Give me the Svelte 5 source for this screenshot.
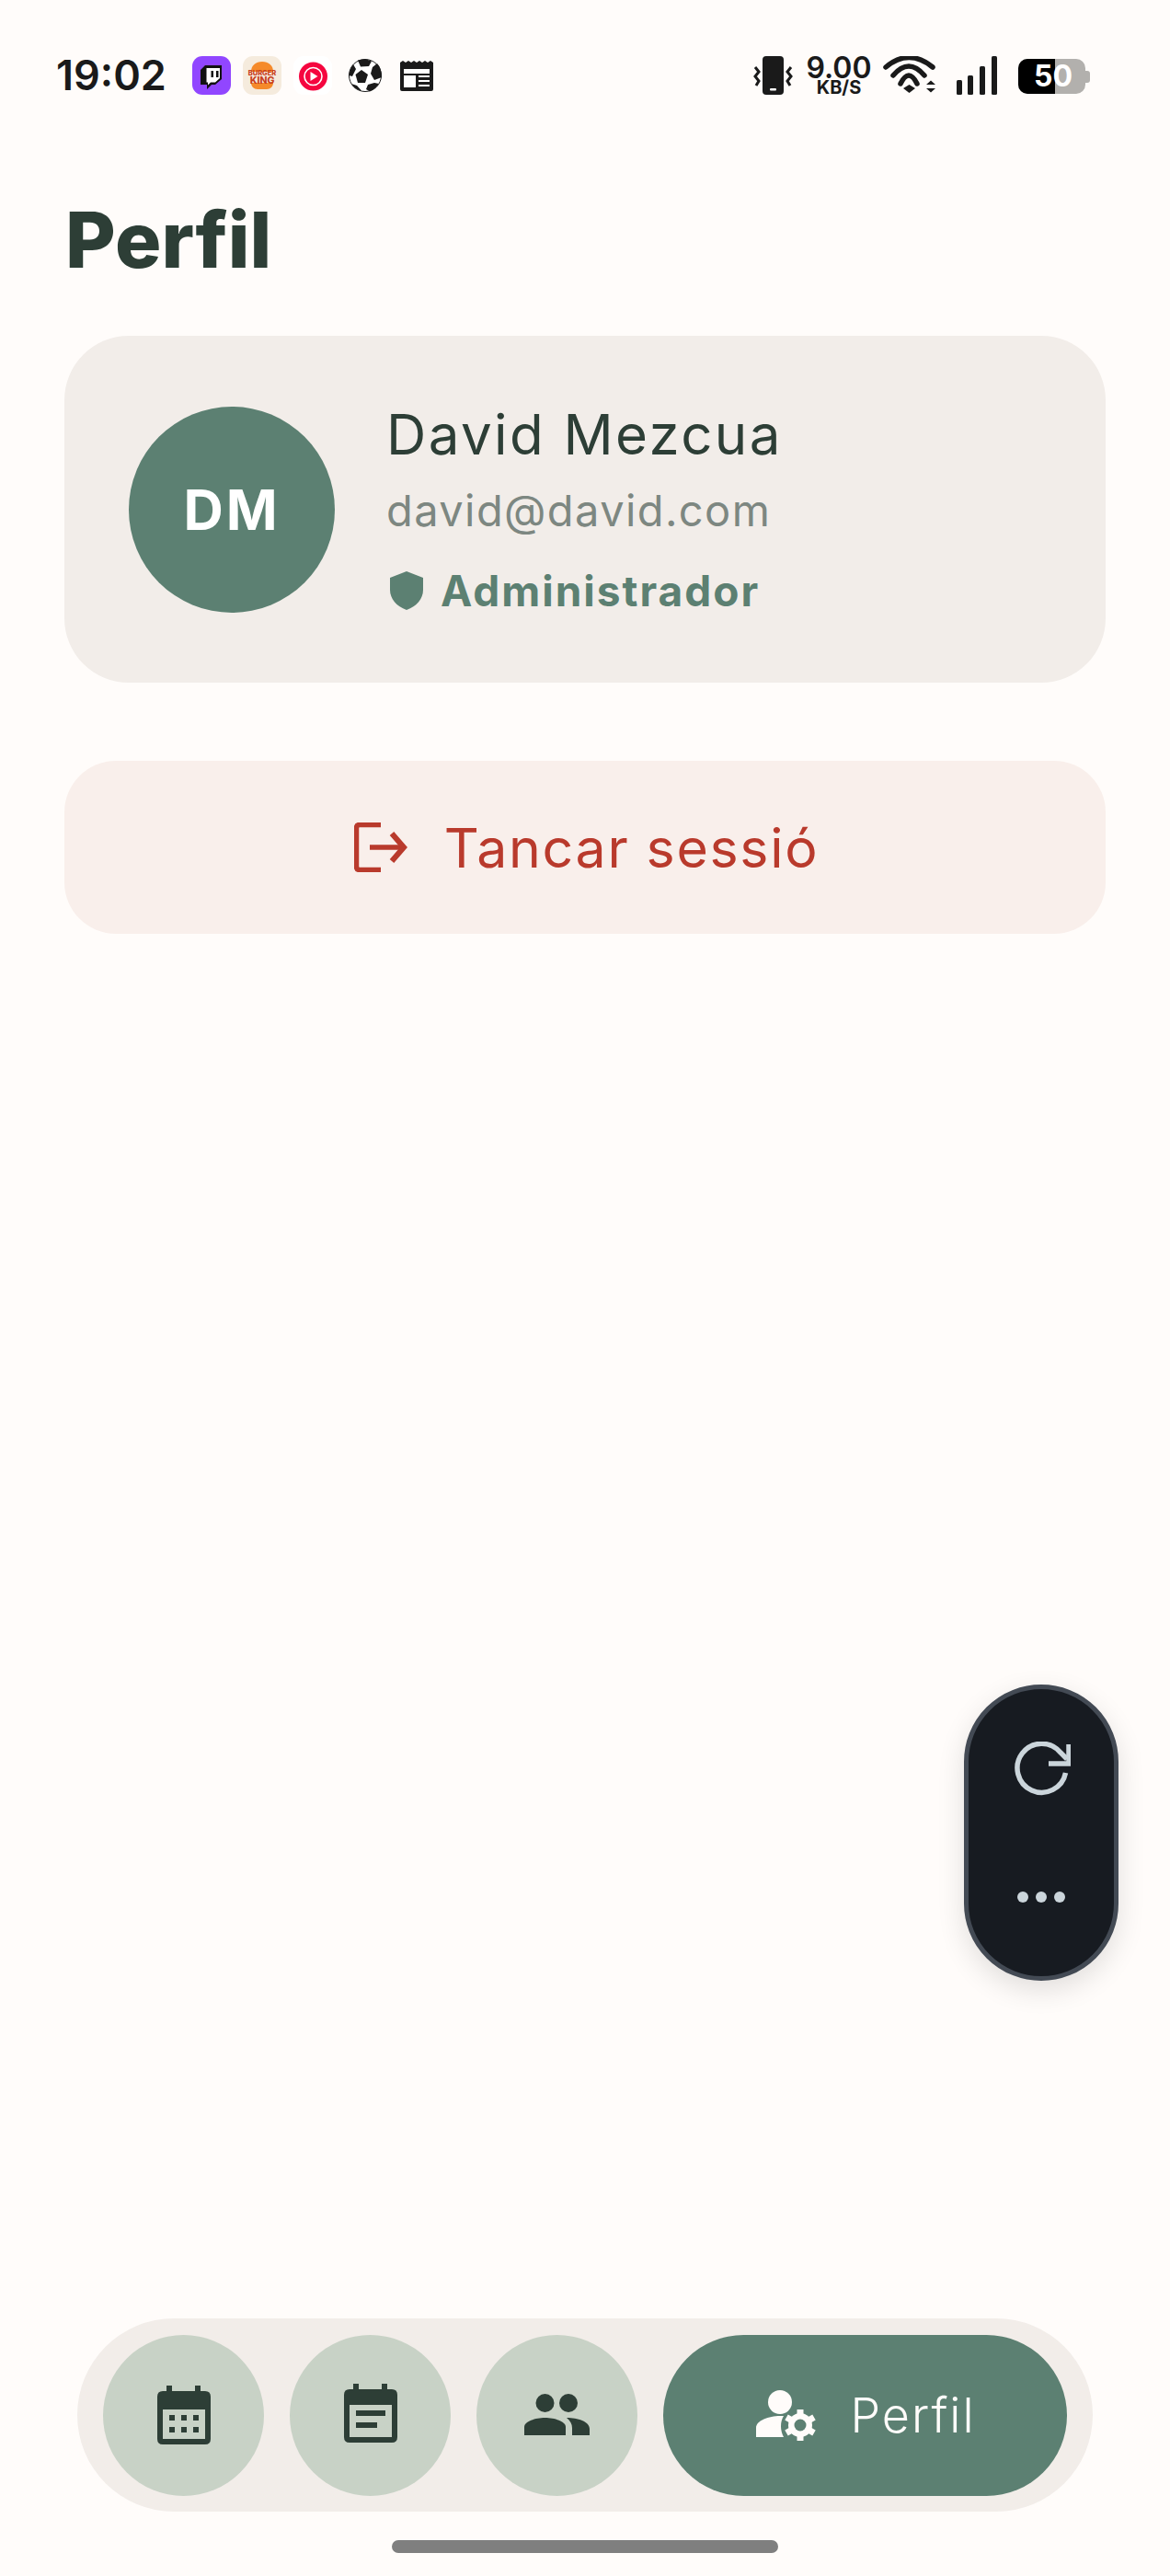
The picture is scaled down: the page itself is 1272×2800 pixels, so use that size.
<script>
  const tabs = ["agenda", "notes", "people"];
</script>

<div class="screen">
  <header class="status">
    <span class="time">19:02</span>
    <div class="apps">
      <svg class="app" width="42" height="42" viewBox="0 0 42 42">
        <rect width="42" height="42" rx="11" fill="#9146ff" />
        <path d="M14 10H32V25L25 31H21L16 36V31H9V15Z" fill="#111" />
        <path d="M15.500 13H30V24L25 28.500H20L17 31.500V28.500H15.500Z" fill="#fff" />
        <rect x="20.500" y="16" width="2.500" height="7" fill="#111" />
        <rect x="26" y="16" width="2.500" height="7" fill="#111" />
      </svg>
      <svg class="app" width="42" height="42" viewBox="0 0 42 42">
        <rect width="42" height="42" rx="11" fill="#f5ebdd" />
        <path d="M9 17C9 10 14 6 21 6S33 10 33 17Z" fill="#f58a2a" />
        <path d="M9 29H33C33 33 30 36 26 36H16C12 36 9 33 9 29Z" fill="#f58a2a" />
        <text x="21" y="20.500" class="bk small">BURGER</text>
        <text x="21" y="30" class="bk">KING</text>
      </svg>
      <svg class="app" width="42" height="42" viewBox="0 0 42 42">
        <rect width="42" height="42" rx="11" fill="#fff" />
        <circle cx="21.500" cy="22" r="15.500" fill="#f5063f" />
        <circle cx="21.500" cy="22" r="9.500" fill="none" stroke="#fff" stroke-width="1.600" />
        <path d="M18.500 17L26.500 22L18.500 27Z" fill="#fff" />
      </svg>
      <svg class="ball" width="36" height="36" viewBox="0 0 36 36">
        <circle cx="18" cy="18" r="17.500" fill="#fff" stroke="#1a1a1a" stroke-width="1" />
        <path d="M14 12L21 17L18 26H10L7.500 17Z" fill="#1a1a1a" />
        <path d="M10 1.500Q18 -1 25 2.500L22 8L13 8.500Z" fill="#1a1a1a" />
        <path d="M26 9L31 5Q36 10 36 20L28 23L24 16Z" fill="#1a1a1a" />
        <path d="M21 28L28 26L33 27Q29 33 23 35.500L19 33Z" fill="#1a1a1a" />
        <path d="M5 6L8 11L4 19L0.500 18Q1 11 5 6Z" fill="#1a1a1a" />
        <path d="M3 27L9 29L14 34.500Q7 34 3 27Z" fill="#1a1a1a" />
      </svg>
      <svg class="news" width="36" height="33" viewBox="0 0 36 33">
        <path d="M0 2L3 0L6 2L9 0L12 2L15 0L18 2L21 0L24 2L27 0L30 2L33 0L36 2V31Q36 33 34 33H2Q0 33 0 31Z" fill="#1a1a1a" />
        <rect x="4" y="9" width="28" height="5" fill="#fff" />
        <rect x="4" y="16" width="13" height="13" fill="#fff" />
        <rect x="20" y="16" width="12" height="2" fill="#fff" />
        <rect x="20" y="21" width="12" height="2" fill="#fff" />
        <rect x="20" y="26" width="12" height="2" fill="#fff" />
      </svg>
    </div>
    <div class="sys">
      <svg width="43" height="42" viewBox="0 0 43 42">
        <rect x="10" y="0" width="23" height="42" rx="4" fill="#1a1a1a" />
        <rect x="18" y="35" width="7" height="2.500" rx="1" fill="#fff" />
        <path d="M2 12L6 17L2 22L6 27L3 32" fill="none" stroke="#1a1a1a" stroke-width="3" />
        <path d="M41 12L37 17L41 22L37 27L40 32" fill="none" stroke="#1a1a1a" stroke-width="3" />
      </svg>
      <div class="speed"><b>9.00</b><small>KB/S</small></div>
      <svg width="60" height="42" viewBox="0 0 60 42">
        <path d="M3 12Q28 -9 54 12" fill="none" stroke="#1a1a1a" stroke-width="5.500" stroke-linecap="round" />
        <path d="M11 21Q28 1 45 21" fill="none" stroke="#1a1a1a" stroke-width="5.500" stroke-linecap="round" />
        <path d="M19 30Q28 12 37 30" fill="none" stroke="#1a1a1a" stroke-width="5.500" stroke-linecap="round" />
        <path d="M22 35L28.500 31L35 35L28.500 40Z" fill="#1a1a1a" />
        <path d="M47 31L52 26.500L57 31ZM47 35H57L52 39.500Z" fill="#1a1a1a" />
      </svg>
      <svg class="signal" width="44" height="42" viewBox="0 0 44 42">
        <rect x="0" y="26" width="6" height="16" rx="1.500" fill="#1a1a1a" />
        <rect x="12" y="21" width="6" height="21" rx="1.500" fill="#1a1a1a" />
        <rect x="25" y="11" width="6" height="31" rx="1.500" fill="#1a1a1a" />
        <rect x="38" y="0" width="6" height="42" rx="1.500" fill="#1a1a1a" />
      </svg>
      <div class="battery">
        <div class="fill"></div>
        <span>50</span>
        <i></i>
      </div>
    </div>
  </header>

  <main>
    <h1>Perfil</h1>

    <section class="card">
      <div class="avatar">DM</div>
      <div class="info">
        <div class="name">David Mezcua</div>
        <div class="email">david@david.com</div>
        <div class="role">
          <svg width="36" height="42" viewBox="0 0 36 42">
            <path d="M18 0L36 7V20C36 30 29 38 18 42C7 38 0 30 0 20V7Z" fill="#5c8072" />
          </svg>
          <span>Administrador</span>
        </div>
      </div>
    </section>

    <button class="logout">
      <svg width="58" height="54" viewBox="0 0 58 54">
        <path d="M29 2.500H6Q2.500 2.500 2.500 6V48Q2.500 51.500 6 51.500H29" fill="none" stroke="#b93a2c" stroke-width="5.500" />
        <path d="M17 27H52" fill="none" stroke="#b93a2c" stroke-width="5.500" />
        <path d="M41 12L54 27L41 42" fill="none" stroke="#b93a2c" stroke-width="6" />
      </svg>
      <span>Tancar sessió</span>
    </button>
  </main>

  <aside class="fab">
    <svg width="61" height="60" viewBox="0 0 61 60">
      <path d="M55.500 34A26.500 26.500 0 1 1 50 12L57 19" fill="none" stroke="#cbd5db" stroke-width="5.500" />
      <path d="M59 3V24H37" fill="none" stroke="#cbd5db" stroke-width="5.500" />
    </svg>
    <div class="dots"><i></i><i></i><i></i></div>
  </aside>

  <nav>
    {#each tabs as tab}
      <button class="tab">
        {#if tab === "agenda"}
          <svg width="58" height="64" viewBox="0 0 58 64">
            <path fill-rule="evenodd" d="M10 0H16V6H41V0H47V6H52Q58 6 58 12V58Q58 64 52 64H6Q0 64 0 58V12Q0 6 6 6H10ZM6 26V58H52V26Z" fill="#2d3e36" />
            <path d="M13 32h6v6h-6zM26 32h6v6h-6zM39 32h6v6h-6zM13 45h6v6h-6zM26 45h6v6h-6zM39 45h6v6h-6z" fill="#2d3e36" />
          </svg>
        {:else if tab === "notes"}
          <svg class="notes" width="58" height="64" viewBox="0 0 58 64">
            <path fill-rule="evenodd" d="M10 0H16V6H41V0H47V6H52Q58 6 58 12V58Q58 64 52 64H6Q0 64 0 58V12Q0 6 6 6H10ZM6 23V58H52V23Z" fill="#2d3e36" />
            <path d="M13 29H45V35H13ZM13 42H36V48H13Z" fill="#2d3e36" />
          </svg>
        {:else}
          <svg class="people" width="71" height="45" viewBox="0 0 71 45">
            <circle cx="22.500" cy="10" r="10" fill="#2d3e36" />
            <circle cx="48" cy="10" r="10" fill="#2d3e36" />
            <path d="M0 45V36C0 30 12 26 22.500 26S45 30 45 36V45Z" fill="#2d3e36" />
            <path d="M46 26C58 26 71 30 71 38V45H52V37C52 33 50 29 46 26Z" fill="#2d3e36" />
          </svg>
        {/if}
      </button>
    {/each}
    <button class="tab active">
      <svg width="65" height="55" viewBox="0 0 65 55">
        <circle cx="26" cy="13" r="13" fill="#fffcfa" />
        <path d="M0 51V41C0 33 14 28 26 28L30 28C26 34 26 44 30 51Z" fill="#fffcfa" />
        <path d="M48 38V21M48 38V55M48 38L33 29.500M48 38L63 29.500M48 38L33 46.500M48 38L63 46.500" stroke="#fffcfa" stroke-width="7" />
        <circle cx="48" cy="38" r="13" fill="#fffcfa" />
        <circle cx="48" cy="38" r="6.500" fill="#5c8072" />
      </svg>
      <span>Perfil</span>
    </button>
  </nav>
  <div class="home"></div>
</div>

<style>
  :global(body) {
    margin: 0;
    background: #fffcfa;
  }

  .screen {
    position: relative;
    width: 1272px;
    height: 2800px;
    display: flex;
    flex-direction: column;
    background: #fffcfa;
    font-family: Inter, "Liberation Sans", sans-serif;
    overflow: hidden;
  }

  .status {
    display: flex;
    align-items: flex-start;
    height: 42px;
    padding: 61px 0 0 61px;
    color: #1a1a1a;
  }

  .time {
    width: 148px;
    font-size: 45px;
    line-height: 42px;
    font-weight: 600;
  }

  .apps {
    display: flex;
    align-items: flex-start;
    gap: 13px;
  }

  .bk {
    fill: #c8401c;
    font-size: 10.500px;
    font-weight: 800;
    text-anchor: middle;
  }

  .bk.small {
    font-size: 7.500px;
  }

  .ball {
    margin: 3px 0 0 5px;
  }

  .news {
    margin: 5px 0 0 7px;
  }

  .sys {
    display: flex;
    margin-left: 348px;
  }

  .speed {
    width: 72px;
    margin: 0 12px 0 14px;
    text-align: center;
    line-height: 1;
  }

  .speed b {
    display: block;
    font-size: 32px;
    line-height: 25px;
    font-weight: 600;
  }

  .speed small {
    display: block;
    font-size: 20px;
    line-height: 19px;
    font-weight: 700;
  }

  .signal {
    margin-left: 20px;
  }

  .battery {
    position: relative;
    width: 73px;
    height: 38px;
    margin: 3px 0 0 23px;
    border-radius: 10px;
    background: #b2b0ad;
  }

  .battery .fill {
    position: absolute;
    inset: 0 33px 0 0;
    background: #000;
    border-radius: 10px 0 0 10px;
  }

  .battery span {
    position: absolute;
    left: 17px;
    top: 0;
    color: #fff;
    font-size: 32px;
    line-height: 38px;
    font-weight: 700;
  }

  .battery i {
    position: absolute;
    left: 73px;
    top: 13px;
    width: 5px;
    height: 13px;
    background: #b2b0ad;
    border-radius: 0 3px 3px 0;
  }

  main {
    padding: 0 70px;
  }

  h1 {
    margin: 116px 0 0 1px;
    font-size: 84px;
    line-height: 84px;
    font-weight: 800;
    color: #2d3e36;
  }

  .card {
    display: flex;
    align-items: center;
    gap: 56px;
    height: 377px;
    margin-top: 62px;
    padding: 0 70px;
    box-sizing: border-box;
    border-radius: 70px;
    background: #f2ede9;
  }

  .avatar {
    display: flex;
    align-items: center;
    justify-content: center;
    width: 224px;
    height: 224px;
    border-radius: 50%;
    background: #5c8072;
    color: #fff;
    font-size: 60px;
    font-weight: 700;
    letter-spacing: 3px;
  }

  .name {
    font-size: 60px;
    line-height: 70px;
    letter-spacing: 2.400px;
    color: #2d3e36;
  }

  .email {
    margin-top: 20px;
    font-size: 47px;
    line-height: 56px;
    letter-spacing: 1.400px;
    color: #7d8781;
  }

  .role {
    display: flex;
    align-items: center;
    gap: 19px;
    margin: 31px 0 0 4px;
    font-size: 46px;
    line-height: 56px;
    font-weight: 700;
    letter-spacing: 2px;
    color: #5c8072;
  }

  .logout {
    display: flex;
    align-items: center;
    justify-content: center;
    gap: 40px;
    width: 100%;
    height: 188px;
    margin-top: 85px;
    border: 0;
    border-radius: 56px;
    background: #f9efeb;
    color: #b93a2c;
    font-family: inherit;
    font-size: 59px;
    letter-spacing: 1.700px;
  }

  .logout svg {
    margin-left: 3px;
  }

  .fab {
    position: absolute;
    left: 1048px;
    top: 1831px;
    width: 168px;
    height: 322px;
    box-sizing: border-box;
    border: 5px solid #434a54;
    border-radius: 84px;
    background: #171b21;
    box-shadow: 0 10px 30px rgba(0, 0, 0, 0.12);
    display: flex;
    flex-direction: column;
    align-items: center;
    padding-top: 57px;
  }

  .fab svg {
    margin-left: 2px;
  }

  .dots {
    display: flex;
    gap: 8px;
    margin-top: 103px;
  }

  .dots i {
    width: 12px;
    height: 12px;
    border-radius: 50%;
    background: #cbd5db;
  }

  nav {
    position: absolute;
    left: 84px;
    top: 2520px;
    width: 1104px;
    height: 210px;
    box-sizing: border-box;
    display: flex;
    align-items: center;
    gap: 28px;
    padding: 0 28px;
    border-radius: 105px;
    background: #f2ede9;
  }

  .tab {
    display: flex;
    align-items: center;
    justify-content: center;
    width: 175px;
    height: 175px;
    padding: 0;
    border: 0;
    border-radius: 88px;
    background: #c8d2c6;
  }

  .notes {
    margin-top: -5px;
  }

  .people {
    margin-top: -1px;
  }

  .tab.active {
    flex: 1;
    gap: 37px;
    background: #5c8072;
    color: #fffcfa;
    font-family: inherit;
    font-size: 52px;
    font-weight: 300;
    letter-spacing: 2px;
  }

  .tab.active svg {
    margin-left: 2px;
  }

  .home {
    position: absolute;
    left: 426px;
    top: 2761px;
    width: 420px;
    height: 14px;
    border-radius: 7px;
    background: #7f7f7f;
  }
</style>
